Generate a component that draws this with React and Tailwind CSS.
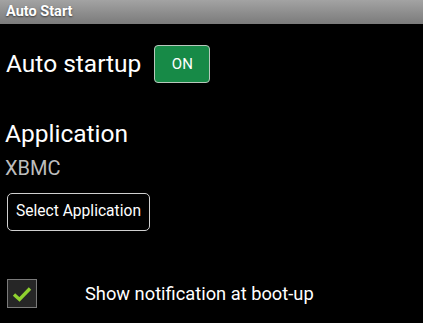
import React from 'react';

export default function App() {
  return (
    <div className="w-[423px] h-[323px] bg-black overflow-hidden" style={{ fontFamily: 'Roboto, "Noto Sans", sans-serif' }}>
      {/* Title bar */}
      <div className="h-[24px] bg-gradient-to-b from-[#a3a3a3] to-[#7b7b7b] flex items-center px-[6px]">
        <span className="text-white text-[14.5px] font-bold [text-shadow:0_1px_2px_rgba(0,0,0,0.6)]">Auto Start</span>
      </div>

      {/* Auto startup row */}
      <div className="flex items-center pl-[6px] mt-[21px] h-[38px]">
        <span className="text-white text-[24.5px] leading-none">Auto startup</span>
        <button className="ml-[13px] w-[56px] h-[38px] bg-[#178a47] border border-[#b8c8bc] rounded-[4px] text-white text-[15px] flex items-center justify-center">
          ON
        </button>
      </div>

      {/* Application */}
      <div className="pl-[5px] mt-[37px]">
        <div className="text-white text-[24.5px] leading-[28px]">Application</div>
        <div className="text-[#bdbdbd] text-[20px] leading-[24px] mt-[8px]">XBMC</div>
        <button className="mt-[13px] ml-[2px] w-[143px] h-[38px] bg-black border border-[#d0d0d0] rounded-[5px] text-white text-[15.6px] flex items-center justify-center">
          Select Application
        </button>
      </div>

      {/* Notification checkbox */}
      <div className="flex items-center pl-[7px] mt-[48px]">
        <div className="w-[30px] h-[29px] bg-[#262626] border border-[#7a7a7a] flex items-center justify-center">
          <svg width="20" height="16" viewBox="0 0 20 16">
            <path d="M2 8.5 L7.5 13.5 L18 2.5" fill="none" stroke="#8fd12f" strokeWidth="3.4" strokeLinecap="butt" />
          </svg>
        </div>
        <span className="ml-[48px] text-white text-[18.3px]">Show notification at boot-up</span>
      </div>
    </div>
  );
}
